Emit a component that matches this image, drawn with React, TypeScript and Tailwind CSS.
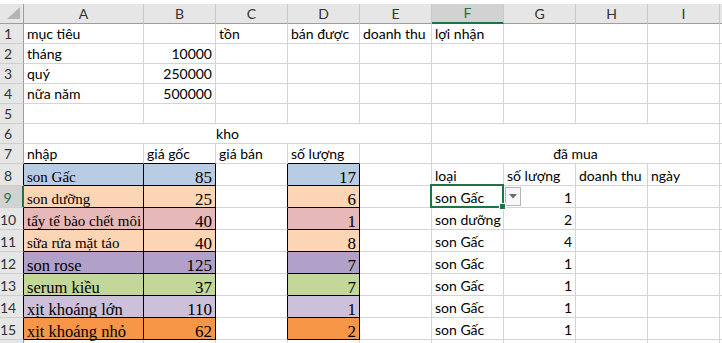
import React from 'react';

// sheet colours
const GRID_R = 'border-r-[#d4d4d4]';
const GRID_B = 'border-b-[#d4d4d4]';
const SANS = "font-['Lato',sans-serif] text-[14px] leading-[17px] pb-[1px]";
const SERIF = "font-['Liberation_Serif','Times_New_Roman',serif] leading-[15px]";

type CellProps = {
  children?: React.ReactNode;
  className?: string;
  r?: string;
  b?: string;
  serif?: boolean;
};

function Cell({ children, className = '', r = GRID_R, b = GRID_B, serif = false }: CellProps) {
  return (
    <div
      className={`relative flex items-end whitespace-nowrap px-[3px] text-black border-r border-b ${r} ${b} ${
        serif ? SERIF : SANS
      } ${className}`}
    >
      {children}
    </div>
  );
}

function ColHead({ label, active = false }: { label: string; active?: boolean }) {
  return (
    <div
      className={`flex items-end justify-center pb-[1px] font-['Lato',sans-serif] text-[14px] leading-[17px] border-r border-r-[#c8c8c8] ${
        active
          ? 'bg-[#d2d2d2] text-[#217346] border-b-2 border-b-[#217346]'
          : 'bg-[#e6e6e6] text-[#333] border-b border-b-[#9e9e9e]'
      }`}
    >
      {label}
    </div>
  );
}

function RowHead({ n, edge = 'border-r-[#9e9e9e]', active = false }: { n?: number; edge?: string; active?: boolean }) {
  return (
    <div
      className={`flex items-end justify-center pr-[7px] pb-[1px] font-['Lato',sans-serif] text-[14px] leading-[17px] border-b border-b-[#cfcfcf] ${edge} ${
        active ? 'bg-[#d2d2d2] text-[#217346] border-r-2' : 'bg-[#e6e6e6] text-[#333] border-r'
      }`}
    >
      {n}
    </div>
  );
}

const targets = [
  { label: 'mục tiêu', value: '' },
  { label: 'tháng', value: '10000' },
  { label: 'quý', value: '250000' },
  { label: 'nữa năm', value: '500000' },
];

const stock = [
  { name: 'son Gấc', price: 85, qty: 17, bg: 'bg-[#b8cce4]', big: false },
  { name: 'son dưỡng', price: 25, qty: 6, bg: 'bg-[#fcd5b4]', big: false },
  { name: 'tẩy tế bào chết môi', price: 40, qty: 1, bg: 'bg-[#e6b8b7]', big: false },
  { name: 'sữa rửa mặt táo', price: 40, qty: 8, bg: 'bg-[#fcd5b4]', big: false },
  { name: 'son rose', price: 125, qty: 7, bg: 'bg-[#b1a0c7]', big: true },
  { name: 'serum kiều', price: 37, qty: 7, bg: 'bg-[#c4d79b]', big: true },
  { name: 'xịt khoáng lớn', price: 110, qty: 1, bg: 'bg-[#ccc0da]', big: true },
  { name: 'xịt khoáng nhỏ', price: 62, qty: 2, bg: 'bg-[#f79646]', big: true },
];

const bought: [string, string | number, string, string][] = [
  ['loại', 'số lượng', 'doanh thu', 'ngày'],
  ['son Gấc', 1, '', ''],
  ['son dưỡng', 2, '', ''],
  ['son Gấc', 4, '', ''],
  ['son Gấc', 1, '', ''],
  ['son Gấc', 1, '', ''],
  ['son Gấc', 1, '', ''],
  ['son Gấc', 1, '', ''],
];

function DropButton() {
  return (
    <div className="absolute left-[1px] top-[1px] z-10 flex h-[19px] w-[16px] items-center justify-center border border-[#b4b4b4] bg-[#f8f8f8]">
      <svg width="8" height="5" viewBox="0 0 8 5">
        <path d="M0 0 H8 L4 4.5 Z" fill="#6b6b6b" />
      </svg>
    </div>
  );
}

function SelectionBox() {
  return (
    <div className="pointer-events-none absolute -left-[2px] -top-[2px] -right-[1px] -bottom-[1px] z-20 border-2 border-[#217346]">
      <div className="absolute -right-[4px] -bottom-[4px] h-[7px] w-[7px] border border-white bg-[#217346]" />
    </div>
  );
}

export default function App() {
  const cols = ['A', 'B', 'C', 'D', 'E', 'F', 'G', 'H', 'I', 'J'];

  return (
    <div className="h-[343px] w-[722px] overflow-hidden bg-white pt-[4px]">
      <div className="grid grid-cols-[24px_120px_repeat(8,72px)_1fr] grid-rows-[20px_repeat(7,20px)_repeat(8,22px)_20px]">
        {/* column headers; J only peeks in at the right edge */}
        <div className="relative border-r border-b border-r-[#9e9e9e] border-b-[#9e9e9e] bg-[#e6e6e6]">
          <svg className="absolute left-[7px] top-[3px]" width="14" height="13" viewBox="0 0 14 13">
            <path d="M13 0 V12 H0 Z" fill="#b5b5b5" />
          </svg>
        </div>
        {cols.map((c) => (
          <ColHead key={c} label={c === 'J' ? '' : c} active={c === 'F'} />
        ))}

        {/* rows 1-4: targets */}
        {targets.map((t, i) => (
          <React.Fragment key={t.label}>
            <RowHead n={i + 1} />
            <Cell>{t.label}</Cell>
            <Cell className="justify-end">{t.value}</Cell>
            <Cell>{i === 0 ? 'tồn' : ''}</Cell>
            <Cell>{i === 0 ? 'bán được' : ''}</Cell>
            <Cell>{i === 0 ? 'doanh thu' : ''}</Cell>
            <Cell>{i === 0 ? 'lợi nhận' : ''}</Cell>
            <Cell />
            <Cell />
            <Cell />
            <Cell />
          </React.Fragment>
        ))}

        {/* row 5 */}
        <RowHead n={5} />
        {cols.map((c) => (
          <Cell key={c} />
        ))}

        {/* row 6 */}
        <RowHead n={6} />
        <Cell className="col-span-5 justify-center">kho</Cell>
        <Cell className="col-span-4" />
        <Cell />

        {/* row 7 */}
        <RowHead n={7} />
        <Cell b="border-b-black">nhập</Cell>
        <Cell b="border-b-black">giá gốc</Cell>
        <Cell>giá bán</Cell>
        <Cell b="border-b-black">số lượng</Cell>
        <Cell />
        <Cell className="col-span-4 justify-center">đã mua</Cell>
        <Cell />

        {/* rows 8-15: stock table and purchases */}
        {stock.map((s, i) => {
          const row = i + 8;
          const [kind, count, revenue, day] = bought[i];
          const textSize = s.big ? 'text-[16.5px]' : 'text-[15px]';
          return (
            <React.Fragment key={row}>
              <RowHead
                n={row}
                active={row === 9}
                edge={row === 9 ? 'border-r-[#217346]' : 'border-r-black'}
              />
              <Cell serif r="border-r-black" b="border-b-black" className={`${s.bg} ${textSize}`}>
                {s.name}
              </Cell>
              <Cell serif r="border-r-black" b="border-b-black" className={`${s.bg} justify-end text-[17px]`}>
                {s.price}
              </Cell>
              <Cell r="border-r-black" />
              <Cell serif r="border-r-black" b="border-b-black" className={`${s.bg} justify-end text-[17px]`}>
                {s.qty}
              </Cell>
              <Cell />
              <Cell>
                {kind}
                {row === 9 && <SelectionBox />}
              </Cell>
              <Cell className={typeof count === 'number' ? 'justify-end' : ''}>
                {row === 9 && <DropButton />}
                {count}
              </Cell>
              <Cell>{revenue}</Cell>
              <Cell>{day}</Cell>
              <Cell />
            </React.Fragment>
          );
        })}

        {/* row 16, only its top edge shows */}
        <RowHead />
        {cols.map((c) => (
          <Cell key={c} />
        ))}
      </div>
    </div>
  );
}
